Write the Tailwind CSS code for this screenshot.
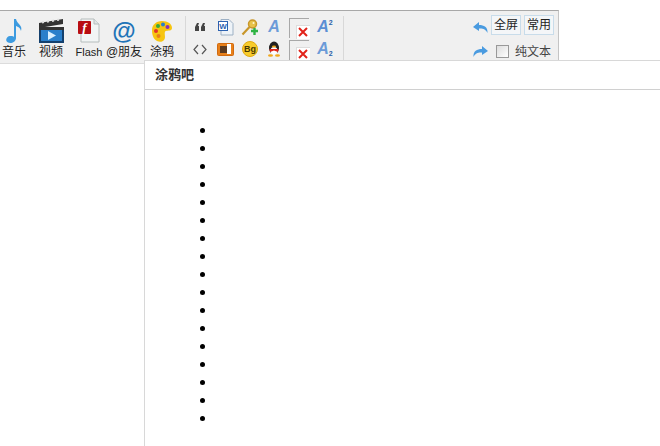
<!DOCTYPE html>
<html lang="zh-CN">
<head>
<meta charset="UTF-8" />
<title>涂鸦吧</title>
<script src="https://cdn.jsdelivr.net/npm/@tailwindcss/browser@4"></script>
</head>
<body class="bg-white">
<div class="relative w-[660px] h-[446px] overflow-hidden pt-[10px] font-['Liberation_Sans','Noto_Sans_CJK_SC',sans-serif] text-[12px] text-[#222]">

  <!-- toolbar -->
  <div class="flex w-[559px] h-[54px] bg-[#f0f0f0] border-t border-t-[#a8a8a8] border-r border-r-[#c4c4c4] border-b border-b-[#dcdcdc]">

    <!-- big buttons -->
    <div class="flex w-[185px] pt-[7px] shrink-0">
      <div class="w-[28px] flex flex-col items-center">
        <svg width="22" height="26" viewBox="0 0 22 26"><path d="M11 1 L13 1 C14 6 20 7 18 13 C17 9 15 9 13 8 L13 20 C13 24 8 26 5 24.500 C2 23 3 18.500 7 18 C9 17.800 10.500 18.200 11 19 Z" fill="#3d9be0"/></svg>
        <span class="leading-[13px] mt-[2px]">音乐</span>
      </div>
      <div class="w-[46px] flex flex-col items-center">
        <svg width="26" height="26" viewBox="0 0 26 26"><path d="M1 5 L25 1 L25 6 L1 10 Z" fill="#333"/><path d="M4 4.500 l2 -.4 M9 3.700 l2 -.4 M14 2.900 l2 -.4 M19 2.100 l2 -.4" stroke="#ddd" stroke-width="2"/><rect x="1" y="9" width="25" height="16" fill="#14406e"/><rect x="1" y="9" width="25" height="3" fill="#333"/><rect x="3" y="12" width="21" height="11" fill="#2a7fcb"/><path d="M10 13 L18 17.500 L10 22 Z" fill="#d9efff"/></svg>
        <span class="leading-[13px] mt-[2px]">视频</span>
      </div>
      <div class="w-[30px] flex flex-col items-center">
        <svg width="24" height="26" viewBox="0 0 24 26"><path d="M4 1 L17 1 L22 6 L22 24 L4 24 Z" fill="#f2f5f5" stroke="#b5bcbc"/><path d="M17 1 L17 6 L22 6" fill="#dfe6e6" stroke="#b5bcbc"/><rect x="1" y="3" width="13" height="13" rx="1" fill="#b80d12"/><text x="7.500" y="14" text-anchor="middle" font-family="Liberation Serif" font-style="italic" font-weight="700" font-size="13" fill="#fff">f</text></svg>
        <span class="text-[11px] leading-[13px] mt-[2px] font-['Liberation_Sans',sans-serif]">Flash</span>
      </div>
      <div class="w-[40px] flex flex-col items-center">
        <span class="h-[26px] leading-[26px] text-[24px] font-bold text-[#1f74b8]">@</span>
        <span class="leading-[13px] mt-[2px] whitespace-nowrap">@朋友</span>
      </div>
      <div class="w-[36px] flex flex-col items-center">
        <svg width="22" height="26" viewBox="0 0 22 26"><path d="M11 3 C17 3 21 6 21 10 C21 13 17 12.500 15 13 C13 13.700 14 16 14 19 C14 23 10 25 6 23 C2 21 1 16 1 12 C1 7 5 3 11 3 Z" fill="#f7c510"/><circle cx="7" cy="8" r="2" fill="#37a83a"/><circle cx="12" cy="6.500" r="2" fill="#2a7fcb"/><circle cx="16.500" cy="9" r="2" fill="#8b2fb8"/><circle cx="5" cy="13" r="2" fill="#e2342a"/><circle cx="7.500" cy="18" r="2" fill="#e8801a"/></svg>
        <span class="leading-[13px] mt-[2px]">涂鸦</span>
      </div>
    </div>

    <!-- small icons -->
    <div class="w-[159px] shrink-0 mt-[5px] border-l border-r border-[#d8d8d8] pl-[1px] grid grid-cols-[26px_25px_24px_24px_26px_26px] grid-rows-[22px_22px] items-center justify-items-center">
      <svg width="12" height="10" viewBox="0 0 12 10"><path d="M1 9 L1 5 L3 1 L5 1 L4 4 L5 4 L5 9 Z M7 9 L7 5 L9 1 L11 1 L10 4 L11 4 L11 9 Z" fill="#444"/></svg>
      <svg width="16" height="17" viewBox="0 0 16 17"><path d="M3 .5 L11 .5 L15 4.500 L15 16 L3 16 Z" fill="#eef3f8" stroke="#9db0c4"/><rect x=".5" y="2.500" width="9" height="9" fill="#fff" stroke="#2d62b0"/><text x="5" y="10" text-anchor="middle" font-family="Liberation Sans" font-weight="700" font-size="8" fill="#2d62b0">W</text></svg>
      <svg width="18" height="17" viewBox="0 0 18 17"><circle cx="11.500" cy="5" r="4" fill="#e8c24a" stroke="#c8962a" stroke-width="1.500"/><circle cx="12.500" cy="4" r="1" fill="#fff6d0"/><path d="M8.500 8 L1.500 15.500" stroke="#c8962a" stroke-width="2.200"/><path d="M10 12 h7 M13.500 9 v7" stroke="#2fb344" stroke-width="2.400"/></svg>
      <span class="text-[16px] leading-none font-bold italic text-[#6b9bd8]">A</span>
      <span class="relative w-[20px] h-[20px] border-l border-t border-[#a8a8a8] -mt-[1px] -ml-[1px] mb-[-2px]">
        <span class="absolute left-[6px] top-[6px] w-[14px] h-[14px] bg-white border-l border-t border-[#ddd] flex items-center justify-center"><svg width="10" height="10" viewBox="0 0 10 10"><path d="M1 1 L9 9 M9 1 L1 9" stroke="#e2231a" stroke-width="2"/></svg></span>
      </span>
      <span class="flex items-start text-[16px] leading-none font-bold italic text-[#5b8fd4]">A<span class="text-[7px] not-italic text-[#2a5fa8]">2</span></span>

      <svg width="14" height="11" viewBox="0 0 14 11"><path d="M5 1 L1 5.500 L5 10 M9 1 L13 5.500 L9 10" fill="none" stroke="#555" stroke-width="1.200"/></svg>
      <svg width="17" height="13" viewBox="0 0 17 13"><rect x=".5" y=".5" width="16" height="12" rx="1" fill="#e8801a" stroke="#d06a10"/><rect x="3" y="3" width="8" height="7" fill="#5b3a20"/><rect x="10" y="1" width="4" height="10" fill="#fff"/></svg>
      <span class="w-[16px] h-[16px] rounded-full bg-[#f8cc2c] border border-[#e0aa10] flex items-center justify-center text-[9px] leading-none font-bold text-[#4a3a00]">Bg</span>
      <svg width="14" height="16" viewBox="0 0 14 16"><ellipse cx="7" cy="7" rx="5" ry="6.500" fill="#222"/><ellipse cx="7" cy="10" rx="3.500" ry="4" fill="#fff"/><path d="M2.500 8 L11.500 8 L11 11 L7 9.500 L3 11 Z" fill="#e2231a"/><ellipse cx="7" cy="5.500" rx="2" ry="1" fill="#f2a81c"/><ellipse cx="3.500" cy="14.500" rx="2.500" ry="1.200" fill="#f2a81c"/><ellipse cx="10.500" cy="14.500" rx="2.500" ry="1.200" fill="#f2a81c"/></svg>
      <span class="relative w-[20px] h-[20px] border-l border-t border-[#a8a8a8] -mt-[1px] -ml-[1px] mb-[-2px]">
        <span class="absolute left-[6px] top-[6px] w-[14px] h-[14px] bg-white border-l border-t border-[#ddd] flex items-center justify-center"><svg width="10" height="10" viewBox="0 0 10 10"><path d="M1 1 L9 9 M9 1 L1 9" stroke="#e2231a" stroke-width="2"/></svg></span>
      </span>
      <span class="flex items-end text-[16px] leading-none font-bold italic text-[#6b9bd8]">A<span class="text-[7px] not-italic text-[#2a5fa8]">2</span></span>
    </div>

    <!-- right side -->
    <div class="flex-1 flex flex-col items-end pr-[4px] pt-[4px]">
      <div class="flex items-center h-[20px]">
        <svg class="mr-[3px] mt-[4px]" width="16" height="13" viewBox="0 0 16 13"><path d="M7 1 L1 6 L7 10 L7 7.500 C10 7 14 8 15.500 12 C16 6 12 4 7 4 Z" fill="#4a9be0"/></svg>
        <span class="w-[30px] h-[20px] bg-[#f4f6f8] border border-[#c8dcea] flex items-center justify-center text-[#222]">全屏</span>
        <span class="ml-[3px] w-[30px] h-[20px] bg-[#f4f6f8] border border-[#c8dcea] flex items-center justify-center text-[#222]">常用</span>
      </div>
      <div class="flex items-center h-[16px] mt-[8px] pr-[1px]">
        <svg class="mr-[7px]" width="16" height="13" viewBox="0 0 16 13"><path d="M9 1 L15 6 L9 10 L9 7.500 C6 7 2 8 .5 12 C0 6 4 4 9 4 Z" fill="#4a9be0"/></svg>
        <span class="w-[13px] h-[13px] border border-[#999] bg-[linear-gradient(135deg,#ddd,#fff)] mr-[6px]"></span>
        <span class="w-[38px] whitespace-nowrap text-[#444] mt-[1px]">纯文本</span>
      </div>
    </div>
  </div>

  <!-- dropdown panel that overlaps the toolbar -->
  <div class="absolute left-[144px] top-[60px] w-[516px] h-[386px] bg-white border-l border-t border-[#d8d8d8]">
    <div class="h-[29px] border-b border-[#d0d0d0] pl-[10px] flex items-center text-[13px] font-bold text-[#333]">涂鸦吧</div>
    <ul class="list-disc pl-[72px] pt-[26px] text-[18px] text-black">
      <li class="h-[18px]"></li>
      <li class="h-[18px]"></li>
      <li class="h-[18px]"></li>
      <li class="h-[18px]"></li>
      <li class="h-[18px]"></li>
      <li class="h-[18px]"></li>
      <li class="h-[18px]"></li>
      <li class="h-[18px]"></li>
      <li class="h-[18px]"></li>
      <li class="h-[18px]"></li>
      <li class="h-[18px]"></li>
      <li class="h-[18px]"></li>
      <li class="h-[18px]"></li>
      <li class="h-[18px]"></li>
      <li class="h-[18px]"></li>
      <li class="h-[18px]"></li>
      <li class="h-[18px]"></li>
    </ul>
  </div>
</div>
</body>
</html>
